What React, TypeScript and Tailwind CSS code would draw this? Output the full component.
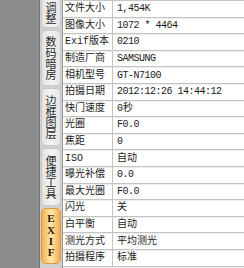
import React from 'react';

type Row = { label: string; value: string };

const ROWS: Row[] = [
  { label: '文件大小', value: '1,454K' },
  { label: '图像大小', value: '1072 * 4464' },
  { label: 'Exif版本', value: '0210' },
  { label: '制造厂商', value: 'SAMSUNG' },
  { label: '相机型号', value: 'GT-N7100' },
  { label: '拍摄日期', value: '2012:12:26 14:44:12' },
  { label: '快门速度', value: '0秒' },
  { label: '光圈', value: 'F0.0' },
  { label: '焦距', value: '0' },
  { label: 'ISO', value: '自动' },
  { label: '曝光补偿', value: '0.0' },
  { label: '最大光圈', value: 'F0.0' },
  { label: '闪光', value: '关' },
  { label: '白平衡', value: '自动' },
  { label: '测光方式', value: '平均测光' },
  { label: '拍摄程序', value: '标准' },
];

const TABS = [
  { label: '调整', h: 'h-[30px]' },
  { label: '数码暗房', h: 'h-[56px]' },
  { label: '边框图层', h: 'h-[58px]' },
  { label: '便捷工具', h: 'h-[58px]' },
];

const hasCjk = (s: string) => /[\u4e00-\u9fff]/.test(s);

const App: React.FC = () => {
  return (
    <div className="w-[244px] h-[268px] flex overflow-hidden bg-white text-[#1a1a1a]">
      {/* grey canvas */}
      <div className="w-[39px] shrink-0 bg-[#8d8d8d]" />

      {/* side tabs */}
      <div className="w-[23px] shrink-0 bg-[#d0d0d0] border-l border-[#777] px-[1px]">
        <div className="-mt-[2px] flex flex-col gap-[2px]">
          {TABS.map((tab) => (
            <div
              key={tab.label}
              className={`${tab.h} flex flex-col items-center justify-center rounded-[4px] border border-[#c8c8c8] bg-gradient-to-r from-[#e2e2e2] via-[#f4f4f4] to-[#e5e5e5] text-[11px] leading-[11px] text-[#2a2a2a] font-['Noto_Sans_CJK_SC',sans-serif]`}
            >
              {tab.label.split('').map((c, i) => (
                <span key={i} className="h-[11px] flex items-center">{c}</span>
              ))}
            </div>
          ))}
          <div className="h-[56px] flex flex-col items-center justify-center rounded-[5px] border border-[#dc9a40] bg-gradient-to-r from-[#f4b157] via-[#fde7a6] to-[#f3ac50] text-[11px] leading-[11.3px] font-bold text-[#2a1a0a] font-['Liberation_Serif',serif]">
            {'EXIF'.split('').map((c, i) => (
              <span key={i}>{c}</span>
            ))}
          </div>
        </div>
      </div>

      {/* exif table */}
      <div className="flex-1 border-l border-[#9a9a9a] border-t border-t-[#c6c6c6]">
        {ROWS.map((row) => (
          <div
            key={row.label}
            className="h-[16.6px] flex border-b border-[#c4c4c4] shadow-[0_1px_0_#ededed] font-['Liberation_Mono','Noto_Sans_CJK_SC',monospace]"
          >
            <div className="w-[50px] shrink-0 pl-[2px] border-r border-[#c4c4c4] flex items-center text-[10px] whitespace-nowrap overflow-hidden">
              {row.label}
            </div>
            <div
              className={
                hasCjk(row.value)
                  ? 'pl-[4px] flex items-center text-[10px] whitespace-nowrap'
                  : 'pl-[4px] flex items-center text-[10px] tracking-[-0.5px] whitespace-nowrap'
              }
            >
              {row.value}
            </div>
          </div>
        ))}
      </div>
    </div>
  );
};

export default App;
